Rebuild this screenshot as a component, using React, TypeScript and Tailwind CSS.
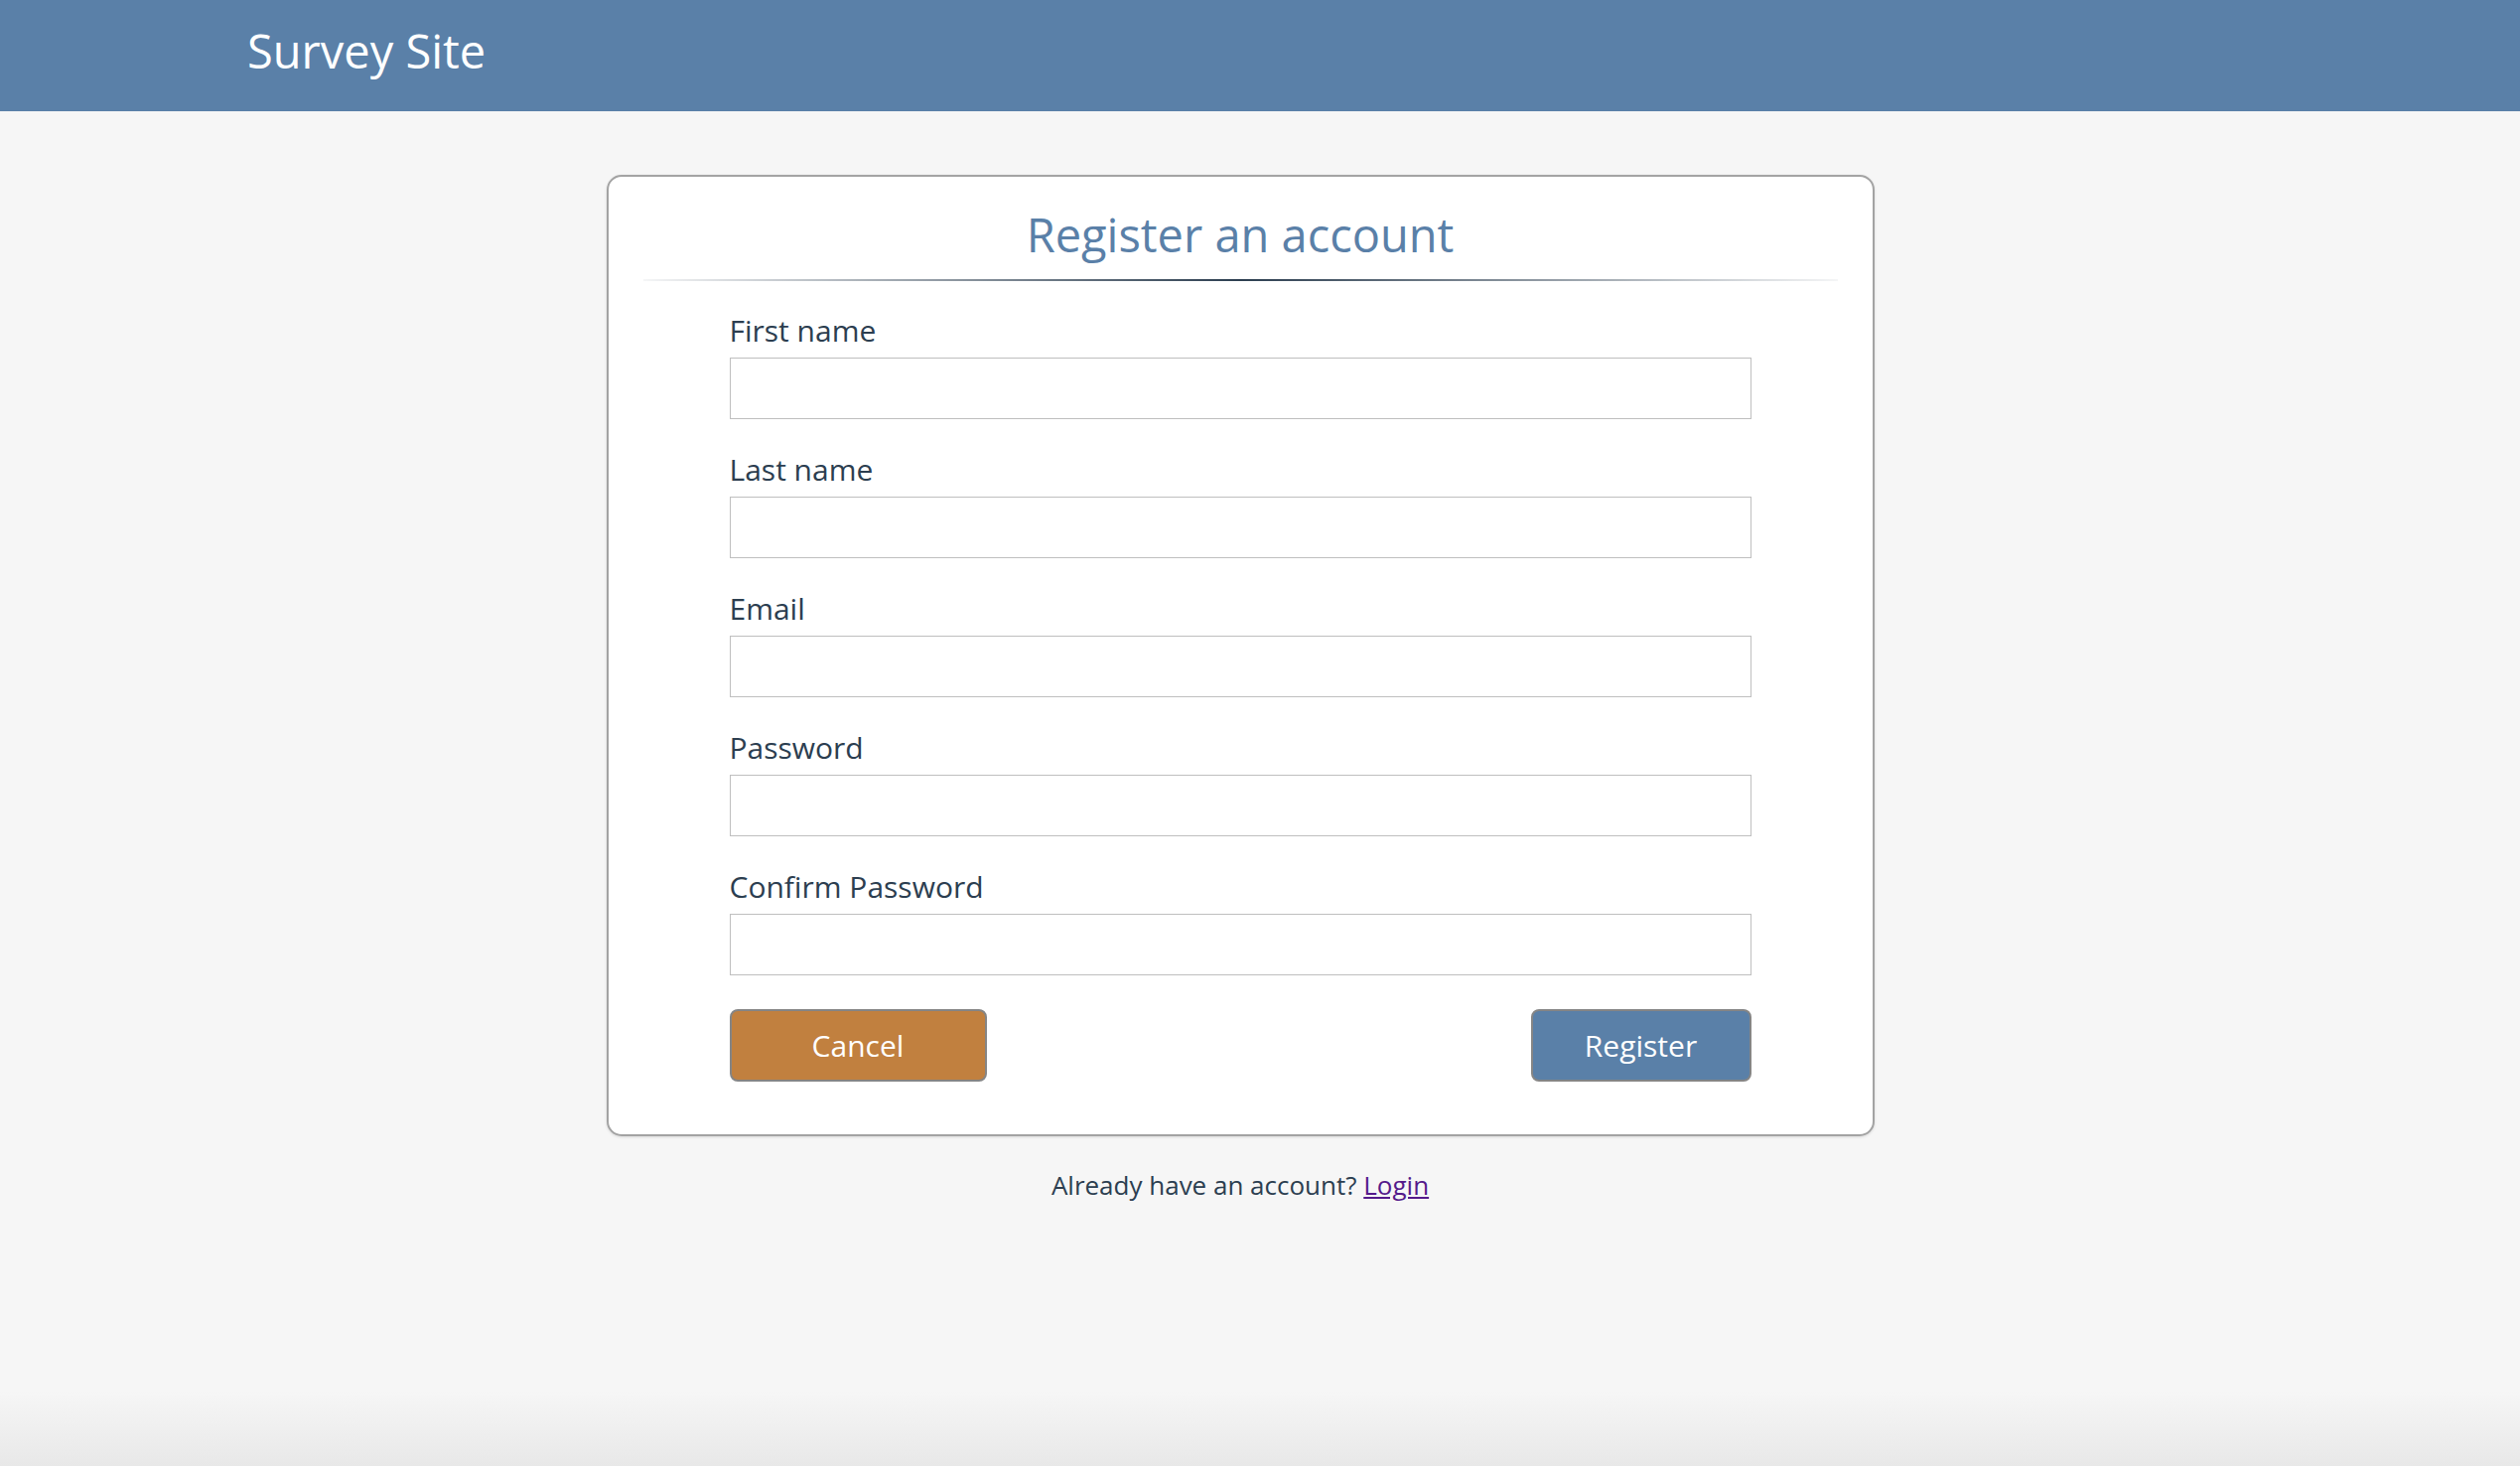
import { useState } from 'react';

const FIELDS = [
  { id: 'firstName', label: 'First name', type: 'text' },
  { id: 'lastName', label: 'Last name', type: 'text' },
  { id: 'email', label: 'Email', type: 'email' },
  { id: 'password', label: 'Password', type: 'password' },
  { id: 'confirmPassword', label: 'Confirm Password', type: 'password' },
];

export default function App() {
  const [values, setValues] = useState<Record<string, string>>({});

  return (
    <div
      className="min-h-screen flex flex-col bg-[linear-gradient(to_bottom,#f6f6f6_calc(100%-75px),#e8e8e8)]"
      style={{ fontFamily: '"Open Sans", "Noto Sans", sans-serif' }}
    >
      {/* Header bar */}
      <header className="h-[112px] bg-[#5a80a8] pl-[249px] pt-[28px]">
        <div className="text-[47px] leading-none text-white">Survey Site</div>
      </header>

      <main className="pr-[40px] pt-[64px]">
        <div className="mx-auto w-[1277px] rounded-[15px] border-2 border-[#a3a3a3] bg-white px-[35px] pt-[35px] pb-[53px] shadow-[0_1px_3px_rgba(0,0,0,0.12)]">
          <h1 className="text-center text-[47px] leading-none text-[#5a80a8]">Register an account</h1>
          <div className="mt-[21px] h-[2px] bg-[linear-gradient(to_right,rgba(44,62,80,0.05),#2c3e50,rgba(44,62,80,0.05))]" />

          <form className="mx-auto mt-[35px] w-[1029px]" onSubmit={(e) => e.preventDefault()}>
            <div className="flex flex-col gap-[36px]">
              {FIELDS.map((field) => (
                <div key={field.id}>
                  <label htmlFor={field.id} className="block text-[30px] leading-none text-[#2c3e50]">
                    {field.label}
                  </label>
                  <input
                    id={field.id}
                    type={field.type}
                    value={values[field.id] ?? ''}
                    onChange={(e) => setValues({ ...values, [field.id]: e.target.value })}
                    className="mt-[12px] block h-[62px] w-full border border-[#bfbfbf] bg-white px-3 text-[26px] outline-none"
                  />
                </div>
              ))}
            </div>

            <div className="mt-[34px] flex justify-between">
              <button
                type="button"
                className="h-[73px] w-[259px] rounded-[8px] border-2 border-[#858585] bg-[#c1803f] text-[30px] text-white"
              >
                Cancel
              </button>
              <button
                type="submit"
                className="h-[73px] w-[222px] rounded-[8px] border-2 border-[#858585] bg-[#5a80a8] text-[30px] text-white"
              >
                Register
              </button>
            </div>
          </form>
        </div>

        <p className="mt-[36px] text-center text-[26px] leading-none text-[#2c3e50]">
          Already have an account?{' '}
          <a href="#" className="text-[#551a8b] underline">
            Login
          </a>
        </p>
      </main>
    </div>
  );
}
